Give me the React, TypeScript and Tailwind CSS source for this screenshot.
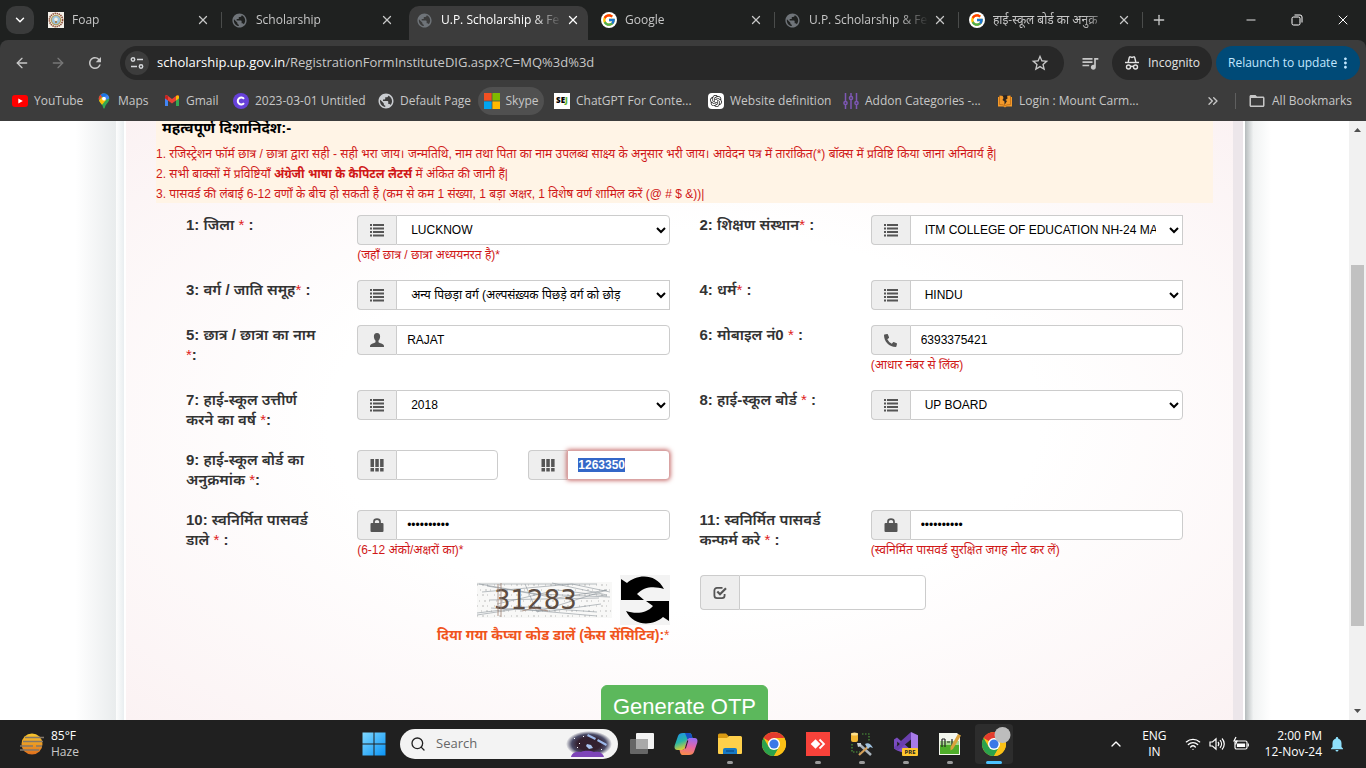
import { useEffect, useRef, type ReactNode } from 'react'
import { ArrowLeft, ArrowRight, ChevronDown, ChevronUp, ChevronsRight, Minus, Plus, Search, X, Wifi } from 'lucide-react'
import { FcGoogle } from 'react-icons/fc'
import { FaPhoneAlt } from 'react-icons/fa'
import { MdPublic, MdQueueMusic, MdStarBorder, MdRefresh, MdMoreVert, MdFolderOpen, MdNotifications } from 'react-icons/md'
import { SiOpenai } from 'react-icons/si'

/* ---------- favicons ---------- */

const Crest = () => (
  <svg viewBox="0 0 16 16" className="size-4">
    <rect width="16" height="16" fill="#f4f1ea" />
    <circle cx="8" cy="8" r="6.6" fill="none" stroke="#8a4a32" strokeWidth="1.6" strokeDasharray="1.4 .7" />
    <circle cx="8" cy="8" r="5.2" fill="#b39a55" />
    <circle cx="8" cy="8" r="4.2" fill="#9cc3dc" />
    <circle cx="8" cy="7.4" r="1.8" fill="#f3efdf" />
    <rect x="7.2" y="9" width="1.6" height="2" fill="#a3703c" />
  </svg>
)

const Globe = () => <MdPublic className="-m-px size-[17px] text-[#6f7479]" />
const LightGlobe = () => <MdPublic className="-m-px size-[18px] text-[#c9ccd0]" />

const Google = () => (
  <span className="flex size-4 items-center justify-center rounded-full bg-white">
    <FcGoogle className="size-3.5" />
  </span>
)

const YouTube = () => (
  <svg viewBox="0 0 16 16" className="size-4">
    <rect y="2" width="16" height="12" rx="3" fill="#f00" />
    <path d="M6.3 5.4v5.2L10.8 8z" fill="#fff" />
  </svg>
)

const Maps = () => (
  <svg viewBox="0 0 16 16" className="size-4">
    <clipPath id="pin">
      <path d="M8 .3a5.3 5.3 0 0 0-5.3 5.4c0 3 2.2 4.3 3.6 6.5C7 13.4 7.2 15.7 8 15.7s1-2.3 1.7-3.5c1.4-2.2 3.6-3.5 3.6-6.5A5.3 5.3 0 0 0 8 .3z" />
    </clipPath>
    <g clipPath="url(#pin)">
      <rect width="16" height="16" fill="#34a853" />
      <path d="M0 0h8L3 8H0z" fill="#ea4335" />
      <path d="M5 0h11L8.500 5.500 4.500 2z" fill="#1a73e8" />
      <path d="M1 10 6 4l4 3-5 6z" fill="#fbbc04" />
      <path d="M16 0v4l-6 3-1-4z" fill="#4285f4" />
    </g>
    <circle cx="8" cy="5.7" r="1.9" fill="#fff" />
  </svg>
)

const Gmail = () => (
  <svg viewBox="0 0 16 16" className="size-4">
    <path d="M1 4v9h3V6.5z" fill="#4285f4" />
    <path d="M15 4v9h-3V6.5z" fill="#34a853" />
    <path d="M1 3.8C1 2.300 2.700 2 3.700 2.800L8 6.100l4.300-3.300C13.300 2 15 2.300 15 3.800v1.400L8 10.500 1 5.200z" fill="#ea4335" />
    <path d="M12 3v4.500l3-2.300V3.800C15 2.300 13.300 2 12 3z" fill="#fbbc04" />
    <path d="M4 3v4.500L1 5.200V3.800C1 2.300 2.700 2 4 3z" fill="#c5221f" />
  </svg>
)

const CBadge = () => (
  <svg viewBox="0 0 16 16" className="size-4">
    <circle cx="8" cy="8" r="8" fill="#6741d9" />
    <path d="M11 10.200A3.500 3.500 0 1 1 11 5.800" fill="none" stroke="#fff" strokeWidth="2" />
  </svg>
)

const Microsoft = () => (
  <svg viewBox="0 0 16 16" className="size-4">
    <path d="M0 0h7.600v7.600H0z" fill="#f25022" />
    <path d="M8.400 0H16v7.600H8.400z" fill="#7fba00" />
    <path d="M0 8.400h7.600V16H0z" fill="#00a4ef" />
    <path d="M8.400 8.400H16V16H8.400z" fill="#ffb900" />
  </svg>
)

const Sej = () => (
  <span className="flex size-4 items-center justify-center bg-white text-[8px] font-black text-black">
    SE<span className="text-[#5cb531]">J</span>
  </span>
)

const OpenAi = () => (
  <span className="flex size-4 items-center justify-center rounded-sm bg-white">
    <SiOpenai className="size-3 text-[#222]" />
  </span>
)

const Sliders = () => (
  <svg viewBox="0 0 16 16" className="size-4" fill="none" stroke="#7e57b5" strokeWidth="1.5">
    <path d="M2.500 0v8M2.500 12v4M8 0v3M8 7v9M13.500 0v8M13.500 12v4" />
    <circle cx="2.5" cy="10" r="1.6" />
    <circle cx="8" cy="5" r="1.6" />
    <circle cx="13.5" cy="10" r="1.6" />
  </svg>
)

const Book = () => (
  <svg viewBox="0 0 16 16" className="size-4">
    <path d="M1 4h1.500V2.500L6 3l2 1.500L10 3l3.500-.5V4H15v9.500H9.500L8 14.500l-1.500-1H1z" fill="#f39a2b" />
    <path d="M2.500 3v8.500l3.500.3 2 1.200 2-1.200 3.500-.3V3" fill="none" stroke="#b8650f" strokeWidth=".7" />
    <path d="M5.500 2.500 10 2l.500 3.500L8.500 7 10 8l-2.500 4V8.500L5.500 7l1-2z" fill="#2d2520" />
  </svg>
)

const Incognito = () => (
  <svg viewBox="0 0 16 16" className="size-4" fill="none" stroke="#e3e3e3" strokeWidth="1.4">
    <path d="M4.200 7 5.300 2.500c.2-.6.6-.8 1.100-.6L8 2.400l1.600-.5c.5-.2.9 0 1.100.6L11.800 7" />
    <path d="M1 7.500h14" />
    <circle cx="4.5" cy="12" r="2" />
    <circle cx="11.5" cy="12" r="2" />
    <path d="M6.500 11.700c1-.6 2-.6 3 0" />
  </svg>
)

const SiteSettings = () => (
  <svg viewBox="0 0 16 16" className="size-4" fill="none" stroke="#d5d7da" strokeWidth="1.5">
    <circle cx="4" cy="4.5" r="1.7" />
    <path d="M8 4.500h6M2 11.500h6" />
    <circle cx="12" cy="11.5" r="1.7" />
  </svg>
)

/* ---------- form glyphs ---------- */

const ListGlyph = () => (
  <svg viewBox="0 0 14 14" className="size-3.5" fill="#555">
    <path d="M0 1h2v2H0zM3 1h11v2H3zM0 4.500h2v2H0zM3 4.500h11v2H3zM0 8h2v2H0zM3 8h11v2H3zM0 11.500h2v2H0zM3 11.500h11v2H3z" />
  </svg>
)

const UserGlyph = () => (
  <svg viewBox="0 0 14 14" className="size-3.5" fill="#555">
    <path d="M7 0C4.800 0 3.800 1.500 3.900 3.700 4 5.500 4.700 6.800 5.500 7.600v1.600C4 10.100 1 10.900.3 12c-.3.500-.3 1.300-.3 2h14c0-.7 0-1.500-.3-2-.7-1.100-3.700-1.900-5.200-2.800V7.600c.8-.8 1.500-2.100 1.600-3.900C10.200 1.500 9.200 0 7 0z" />
  </svg>
)

const PhoneGlyph = () => <FaPhoneAlt className="size-[13px] -scale-x-100 rotate-90 text-[#555]" />

const GridGlyph = () => (
  <svg viewBox="0 0 14 14" className="size-3.5" fill="#555">
    <path d="M.5 1h3.500v8H.5zM5.300 1h3.500v8H5.300zM10.100 1h3.500v8h-3.500zM.5 10h3.500v3.500H.5zM5.300 10h3.500v3.500H5.300zM10.100 10h3.500v3.500h-3.500z" />
  </svg>
)

const LockGlyph = () => (
  <svg viewBox="0 0 14 14" className="size-3.5">
    <path d="M4 6V3.500C4 .2 10 .2 10 3.500V6" fill="none" stroke="#555" strokeWidth="1.7" />
    <rect x=".5" y="5" width="13" height="9" rx="1" fill="#555" />
  </svg>
)

const CheckGlyph = () => (
  <svg viewBox="0 0 14 14" className="size-3.5" fill="none" stroke="#555" strokeWidth="1.8">
    <path d="M9.500 1.800H4A2.600 2.600 0 0 0 1.400 4.400v5.200A2.600 2.600 0 0 0 4 12.200h5a2.600 2.600 0 0 0 2.600-2.600V8" />
    <path d="M4.300 5.500 7 8.200l6-6" strokeWidth="2.2" />
  </svg>
)

/* ---------- browser ---------- */

const tabs = [
  { title: 'Foap', icon: <Crest /> },
  { title: 'Scholarship', icon: <Globe /> },
  { title: 'U.P. Scholarship & Fe', icon: <Globe />, active: true },
  { title: 'Google', icon: <Google /> },
  { title: 'U.P. Scholarship & Fe', icon: <Globe /> },
  { title: 'हाई-स्कूल बोर्ड का अनुक्र', icon: <Google /> },
]

const bookmarks = [
  { title: 'YouTube', icon: <YouTube />, width: 'w-[84px]' },
  { title: 'Maps', icon: <Maps />, width: 'w-[68px]' },
  { title: 'Gmail', icon: <Gmail />, width: 'w-[69px]' },
  { title: '2023-03-01 Untitled', icon: <CBadge />, width: 'w-[145px]' },
  { title: 'Default Page', icon: <LightGlobe />, width: 'w-[100px]' },
  { title: 'Skype', icon: <Microsoft />, width: 'w-[66px] justify-center rounded-full bg-[#505050]' },
  { title: 'ChatGPT For Conte...', icon: <Sej />, width: 'ml-2.5 w-[154px]' },
  { title: 'Website definition', icon: <OpenAi />, width: 'w-[135px]' },
  { title: 'Addon Categories -...', icon: <Sliders />, width: 'w-[154px]' },
  { title: 'Login : Mount Carm...', icon: <Book />, width: '' },
]

function TabStrip() {
  return (
    <div className="flex h-10 shrink-0 items-center bg-[#1f2120] text-[#c7c7c7]">
      <button aria-label="Search tabs" className="ml-1.5 mr-1 flex size-7 shrink-0 items-center justify-center rounded-[10px] bg-[#3a3b3b] text-white">
        <ChevronDown className="size-3.5" strokeWidth={2.5} />
      </button>
      {tabs.map((tab, i) => (
        <div
          key={i}
          className={
            tab.active
              ? 'relative mx-[3px] flex h-[34px] min-w-0 max-w-[179px] flex-1 items-center self-end rounded-t-[10px] bg-[#3c3c3c] pb-1.5 pl-2 pr-2 text-white'
              : 'relative flex h-full min-w-0 max-w-[184px] flex-1 items-center pl-2.5 pr-3'
          }
        >
          <span className="flex w-6 shrink-0">{tab.icon}</span>
          <span className="min-w-0 flex-1 overflow-hidden whitespace-nowrap text-xs [mask-image:linear-gradient(to_right,black_75%,transparent)]">
            {tab.title}
          </span>
          <button aria-label="Close tab" className="ml-1 shrink-0">
            <X className="size-3.5" strokeWidth={2.2} />
          </button>
          {!tab.active && i !== 1 && <span className="absolute right-0 top-3 h-4 w-px bg-[#4a4c4b]" />}
        </div>
      ))}
      <button aria-label="New tab" className="ml-2">
        <Plus className="size-4" />
      </button>
      <div className="ml-auto flex items-center text-white">
        <button aria-label="Minimize" className="flex w-[46px] justify-center"><Minus className="size-3.5" strokeWidth={1.5} /></button>
        <button aria-label="Restore" className="flex w-[46px] justify-center">
          <svg viewBox="0 0 12 12" className="size-3" fill="none" stroke="currentColor">
            <rect x="1" y="3" width="8" height="8" rx="1.5" />
            <path d="M3.500 1h5.500a2 2 0 0 1 2 2v5.500" />
          </svg>
        </button>
        <button aria-label="Close" className="flex w-[46px] justify-center"><X className="size-4" strokeWidth={1.5} /></button>
      </div>
    </div>
  )
}

function Toolbar() {
  return (
    <div className="flex h-[46px] shrink-0 items-center rounded-t-lg bg-[#3c3c3c] pr-1.5 text-[#c7c7c7]">
      <div className="flex w-[120px] shrink-0 items-center gap-5 pl-3.5">
        <button aria-label="Back"><ArrowLeft className="size-4" /></button>
        <button aria-label="Forward" className="text-[#777]"><ArrowRight className="size-4" /></button>
        <button aria-label="Reload"><MdRefresh className="size-[18px]" /></button>
      </div>
      <div className="flex h-[34px] min-w-0 flex-1 items-center rounded-full bg-[#282828] pl-[5px] pr-3.5">
        <span className="flex size-6 shrink-0 items-center justify-center rounded-full bg-[#3c3c3c]"><SiteSettings /></span>
        <span className="ml-2 flex-1 truncate text-[13px]">
          <span className="text-white">scholarship.up.gov.in</span>/RegistrationFormInstituteDIG.aspx?C=MQ%3d%3d
        </span>
        <button aria-label="Bookmark this tab"><MdStarBorder className="size-5" /></button>
      </div>
      <button aria-label="Media" className="flex w-12 shrink-0 items-center justify-center pl-1"><MdQueueMusic className="size-5" /></button>
      <span className="mr-1 flex h-[34px] w-[100px] shrink-0 items-center justify-center gap-2 rounded-full bg-[#282828] text-xs text-[#e3e3e3]">
        <Incognito /> Incognito
      </span>
      <button className="flex h-[34px] w-36 shrink-0 items-center justify-between whitespace-nowrap rounded-full bg-[#004a77] pl-3 pr-1.5 text-xs text-[#c2e7ff]">
        Relaunch to update <MdMoreVert className="size-5" />
      </button>
    </div>
  )
}

function Bookmarks() {
  return (
    <div className="flex h-[35px] shrink-0 items-center bg-[#3c3c3c] pb-1.5 pr-3.5 text-xs text-[#c7c7c7]">
      <nav className="flex min-w-0 flex-1 items-center overflow-hidden pl-3">
        {bookmarks.map((b) => (
          <a key={b.title} href="#" className={`flex h-7 shrink-0 items-center gap-1.5 whitespace-nowrap ${b.width}`}>
            <span className="flex w-4 shrink-0">{b.icon}</span>
            {b.title}
          </a>
        ))}
      </nav>
      <button aria-label="More bookmarks"><ChevronsRight className="size-4" /></button>
      <span className="ml-3.5 mr-3 h-4 w-px bg-[#5f5f5f]" />
      <a href="#" className="flex items-center gap-1.5 whitespace-nowrap">
        <MdFolderOpen className="size-[18px]" />
        All Bookmarks
      </a>
    </div>
  )
}

/* ---------- form ---------- */

const Star = () => <span className="font-normal text-[#e02020]">*</span>

const control = 'h-[30px] w-full min-w-0 border border-[#ccc] bg-white px-2.5 text-xs text-black'

function Addon({ children }: { children: ReactNode }) {
  return (
    <span className="flex w-[39px] shrink-0 items-center justify-center rounded-l border border-r-0 border-[#ccc] bg-[#eee]">
      {children}
    </span>
  )
}

function Label({ id, children }: { id: string; children: ReactNode }) {
  return (
    <label htmlFor={id} className="col-span-2 mb-[5px] block px-[15px] text-[15px] font-semibold leading-5 text-[#333]">
      {children}
    </label>
  )
}

function Field({ icon, help, children }: { icon: ReactNode; help?: string; children: ReactNode }) {
  return (
    <div className="col-span-4 px-[15px]">
      <div className="flex">
        <Addon>{icon}</Addon>
        {children}
      </div>
      {help && <p className="h-5 whitespace-nowrap text-xs leading-5 text-[#d01818]">{help}</p>}
    </div>
  )
}

function SelectBox({ id, value, rounded = true }: { id: string; value: string; rounded?: boolean }) {
  return (
    <select id={id} className={`${control} ${rounded ? 'rounded-r' : ''}`}>
      <option>{value}</option>
    </select>
  )
}

function Row({ children }: { children: ReactNode }) {
  return <div className="mb-[15px] grid grid-cols-12 items-start">{children}</div>
}

function Captcha() {
  return (
    <svg viewBox="0 0 135 36" className="h-9 w-[135px]" role="img" aria-label="Captcha">
      <rect width="135" height="36" fill="#f8f8f7" />
      <g stroke="#cfcfcf" strokeWidth="1.500" strokeDasharray="1 4 2 3 1 6">
        <path d="M0 3h135M3 8h132M0 13h135M2 19h133M0 24h135M4 29h131M0 34h135" />
      </g>
      <g stroke="#8b939a" strokeWidth=".6" fill="none">
        <path d="M2 2 60 12 133 15M0 31 50 25 120 30M5 10l90-8 38 8M20 22l60-14 50 6M10 4l70 12 50-8M14 26l60 3 50-7M0 33l40-6 80 7M60 30 130 8M12 18l110-2M48 2l12 28M75 1l55 12M0 2h120" />
      </g>
      <text x="17" y="27" fontSize="26" fill="#5d4d42" className="[font-family:'DejaVu_Sans',sans-serif]">31283</text>
      <path d="M24 1v34M21 2v32M45 29l12-3 14 3" stroke="#a08272" strokeWidth=".8" fill="none" />
    </svg>
  )
}

function RefreshArrows() {
  return (
    <svg viewBox="0 0 50 50" className="size-[50px]">
      <rect width="50" height="50" fill="#f3f3f3" />
      <path d="M1 4 7 8C17-1 36-2 44 14 35 11 24 11 17 19l7 6H1z" />
      <path d="M49 46 43 42C33 51 14 52 6 36 15 39 26 39 33 31l-7-5h23z" />
    </svg>
  )
}

function RegistrationForm() {
  const roll = useRef<HTMLInputElement>(null)

  useEffect(() => {
    roll.current?.focus({ preventScroll: true })
    roll.current?.select()
  }, [])

  return (
    <form className="px-[15px] pt-3" onSubmit={(e) => e.preventDefault()}>
      <Row>
        <Label id="district">1: जिला <Star /> :</Label>
        <Field icon={<ListGlyph />} help="(जहाँ छात्र / छात्रा अध्ययनरत है)*">
          <SelectBox id="district" value="LUCKNOW" />
        </Field>
        <Label id="institute">2: शिक्षण संस्थान<Star /> :</Label>
        <Field icon={<ListGlyph />}>
          <SelectBox id="institute" value="ITM COLLEGE OF EDUCATION NH-24 MALL ROAD" rounded={false} />
        </Field>
      </Row>
      <Row>
        <Label id="category">3: वर्ग / जाति समूह<Star /> :</Label>
        <Field icon={<ListGlyph />}>
          <SelectBox id="category" value="अन्य पिछड़ा वर्ग (अल्पसंख़्यक पिछड़े वर्ग को छोड़" rounded={false} />
        </Field>
        <Label id="religion">4: धर्म<Star /> :</Label>
        <Field icon={<ListGlyph />}>
          <SelectBox id="religion" value="HINDU" rounded={false} />
        </Field>
      </Row>
      <Row>
        <Label id="student">5: छात्र / छात्रा का नाम <Star />:</Label>
        <Field icon={<UserGlyph />}>
          <input id="student" type="text" defaultValue="RAJAT" className={`${control} rounded-r`} />
        </Field>
        <Label id="mobile">6: मोबाइल नं0 <Star /> :</Label>
        <Field icon={<PhoneGlyph />} help="(आधार नंबर से लिंक)">
          <input id="mobile" type="tel" defaultValue="6393375421" className={`${control} rounded-r`} />
        </Field>
      </Row>
      <Row>
        <Label id="year">7: हाई-स्कूल उत्तीर्ण करने का वर्ष <Star />:</Label>
        <Field icon={<ListGlyph />}>
          <SelectBox id="year" value="2018" />
        </Field>
        <Label id="board">8: हाई-स्कूल बोर्ड <Star /> :</Label>
        <Field icon={<ListGlyph />}>
          <SelectBox id="board" value="UP BOARD" />
        </Field>
      </Row>
      <Row>
        <Label id="roll">9: हाई-स्कूल बोर्ड का अनुक्रमांक <Star />:</Label>
        <div className="col-span-2 flex px-[15px]">
          <Addon><GridGlyph /></Addon>
          <input type="text" aria-label="Roll code" className={`${control} rounded-r`} />
        </div>
        <div className="col-span-2 flex px-[15px]">
          <Addon><GridGlyph /></Addon>
          <input
            id="roll"
            ref={roll}
            type="text"
            defaultValue="1263350"
            className="h-[30px] w-full min-w-0 rounded-r border border-[#d9a3a3] bg-white px-2.5 text-xs font-bold text-black shadow-[0_0_5px_#b94a48] outline-none selection:bg-[#3367c8] selection:text-white"
          />
        </div>
      </Row>
      <Row>
        <Label id="password">10: स्वनिर्मित पासवर्ड डाले <Star /> :</Label>
        <Field icon={<LockGlyph />} help="(6-12 अंको/अक्षरों का)*">
          <input id="password" type="password" defaultValue="Rajat@1234" className={`${control} rounded-r`} />
        </Field>
        <Label id="confirm">11: स्वनिर्मित पासवर्ड कन्फर्म करे <Star /> :</Label>
        <Field icon={<LockGlyph />} help="(स्वनिर्मित पासवर्ड सुरक्षित जगह नोट कर लें)">
          <input id="confirm" type="password" defaultValue="Rajat@1234" className={`${control} rounded-r`} />
        </Field>
      </Row>
      <div className="grid grid-cols-12 items-start">
        <div className="col-span-6 flex flex-col items-end px-[15px]">
          <div className="flex items-center gap-2">
            <Captcha />
            <button type="button" aria-label="New captcha"><RefreshArrows /></button>
          </div>
          <label htmlFor="captcha" className="text-sm font-bold leading-5 text-[#f0541c]">
            दिया गया कैप्चा कोड डालें (केस सेंसिटिव):<span className="font-normal">*</span>
          </label>
        </div>
        <div className="col-span-3 flex h-[35px] px-[15px]">
          <Addon><CheckGlyph /></Addon>
          <input id="captcha" type="text" className="w-full min-w-0 rounded-r border border-[#ccc] bg-white px-2.5 text-xs text-black" />
        </div>
      </div>
      <div className="mt-10 flex justify-center">
        <button className="rounded-md border border-[#5cb85c] bg-[#5cb85c] px-[11px] py-1.5 text-[22px] leading-[30px] text-white">
          Generate OTP
        </button>
      </div>
    </form>
  )
}

function ScrollBar() {
  return (
    <div className="flex w-[17px] shrink-0 flex-col items-center bg-[#f1f1f1]">
      <svg viewBox="0 0 17 17" className="size-[17px] shrink-0" fill="#505050"><path d="M5 11l3.500-4L12 11z" /></svg>
      <div className="grow-[127]" />
      <div className="w-[13px] grow-[361] bg-[#c1c1c1]" />
      <div className="grow-[77]" />
      <svg viewBox="0 0 17 17" className="size-[17px] shrink-0" fill="#505050"><path d="M5 6l3.500 4L12 6z" /></svg>
    </div>
  )
}

function Page() {
  return (
    <div className="flex min-h-0 flex-1 overflow-hidden bg-white [font-family:'Liberation_Sans','Noto_Sans_Devanagari','Noto_Sans',sans-serif]">
      <div className="w-[116px] shrink-0 bg-linear-to-r from-white from-65% to-[#e9eced]" />
      <div className="w-2 shrink-0 bg-linear-to-r from-[#fdfdfd] to-[#e9eef0]" />
      <main className="min-w-0 flex-1 border-x-2 border-white bg-[radial-gradient(ellipse_at_center,#ffffff_45%,#fbf2f3_100%)]">
        <div className="flex">
          <div className="min-w-0 flex-1 pl-[30px] pr-5">
            <section className="flow-root h-[82px] bg-[#fff4e6]">
              <h2 className="-mt-1 pl-1.5 pt-px text-[15px] font-bold leading-5 text-black">महत्वपूर्ण दिशानिर्देश:-</h2>
              <ol className="whitespace-nowrap pt-1.5 text-xs leading-5 text-[#d01818]">
                <li>1. रजिस्ट्रेशन फॉर्म छात्र / छात्रा द्वारा सही - सही भरा जाय। जन्मतिथि, नाम तथा पिता का नाम उपलब्ध साक्ष्य के अनुसार भरी जाय। आवेदन पत्र में तारांकित(*) बॉक्स में प्रविष्टि किया जाना अनिवार्य है|</li>
                <li>2. सभी बाक्सों में प्रविष्टियाँ <b>अंग्रेजी भाषा के कैपिटल लैटर्स</b> में अंकित की जानी हैं|</li>
                <li>3. पासवर्ड की लंबाई 6-12 वर्णों के बीच हो सकती है (कम से कम 1 संख्या, 1 बड़ा अक्षर, 1 विशेष वर्ण शामिल करें (@ # $ &amp;))|</li>
              </ol>
            </section>
            <RegistrationForm />
          </div>
          <div className="w-2.5 shrink-0 self-stretch bg-[#ece6ea]" />
        </div>
      </main>
      <div className="w-[104px] shrink-0 bg-linear-to-r from-[#b5bbbc] via-[#f1f3f3] via-8% to-white to-25%" />
      <ScrollBar />
    </div>
  )
}

/* ---------- taskbar ---------- */

const Chrome = ({ badge = false }: { badge?: boolean }) => (
  <svg viewBox="0 0 24 24" className="size-6 overflow-visible">
    <circle cx="12" cy="12" r="12" fill="#fbc116" />
    <path d="M12 12 1.600 6A12 12 0 0 1 22.400 6H12z" fill="#e33b2e" />
    <path d="M12 12H12L17.200 15 12 24A12 12 0 0 1 1.600 6l5.200 9z" fill="#2ba24c" />
    <path d="M22.400 6A12 12 0 0 1 12 24l5.200-9L17.200 9 12 6z" fill="#fbc116" />
    <circle cx="12" cy="12" r="6" fill="#fff" />
    <circle cx="12" cy="12" r="4.6" fill="#3b78e7" />
    {badge && <circle cx="20.5" cy="3" r="8" fill="#bdbdbd" />}
  </svg>
)

const TaskView = () => (
  <svg viewBox="0 0 24 24" className="size-6">
    <rect x="6" y="1" width="18" height="16" rx="1" fill="#f2f2f2" />
    <rect y="7" width="18" height="15" rx="1" fill="#666" />
    <path d="M6 7h12v10H6z" fill="#a9a9a9" />
  </svg>
)

const Copilot = () => (
  <svg viewBox="0 0 24 24" className="size-6">
    <defs>
      <linearGradient id="cpa" x2=".4" y2="1"><stop stopColor="#1d8ff2" /><stop offset=".55" stopColor="#27b5a5" /><stop offset="1" stopColor="#e4cf2e" /></linearGradient>
      <linearGradient id="cpb" x1=".6" x2=".4" y2="1"><stop stopColor="#9b6cf0" /><stop offset=".5" stopColor="#e566a6" /><stop offset="1" stopColor="#f98b4a" /></linearGradient>
    </defs>
    <path d="M9 1h6c1.500 0 2.300.8 2.800 2.300L18.500 6h-2.700c-1.300 0-2 .7-2.500 2.200l-2.200 7.600C10.600 17.400 9.600 18 8 18H3.500C1 18 0 16 .7 13.500L4 4c.7-2 2.300-3 5-3z" fill="url(#cpa)" />
    <path d="M15 23H9c-1.500 0-2.300-.8-2.800-2.300L5.500 18h2.700c1.300 0 2-.7 2.500-2.200l2.200-7.600c.5-1.600 1.500-2.200 3.100-2.200h4.500C23 6 24 8 23.300 10.500L20 20c-.7 2-2.300 3-5 3z" fill="url(#cpb)" />
    <path d="M11 1h4c1.500 0 2.300.8 2.800 2.300L18.500 6h-2.700c-1 0-1.800.5-2.300 1.600z" fill="#1750c4" />
    <path d="M11.100 15.800 13.300 8.200l1 .5-2.600 8.300z" fill="#202020" />
  </svg>
)

const Explorer = () => (
  <svg viewBox="0 0 24 24" className="size-6">
    <path d="M0 3a1.500 1.500 0 0 1 1.500-1.500H8L10.500 4v4H0z" fill="#d99a12" />
    <path d="M0 6h9l2-2h11.500A1.500 1.500 0 0 1 24 5.500V21a1 1 0 0 1-1 1H1a1 1 0 0 1-1-1z" fill="#ffd04b" />
    <path d="M5 22v-4a2 2 0 0 1 2-2h10a2 2 0 0 1 2 2v4z" fill="#1779c4" />
    <path d="M8 19h8" stroke="#0c5291" strokeWidth="1.5" />
  </svg>
)

const AnyDesk = () => (
  <svg viewBox="0 0 24 24" className="size-6">
    <rect width="24" height="24" fill="#f8423a" />
    <path d="M9.500 7.200 14.300 12l-4.800 4.800L4.700 12z" fill="#fff" />
    <path d="M13.500 7.500 18 12l-4.500 4.500" fill="none" stroke="#fff" strokeWidth="1.8" />
  </svg>
)

const SqlTools = () => (
  <svg viewBox="0 0 24 24" className="size-6">
    <path d="M12 2h7v8M2 12v8h8" fill="none" stroke="#4f9c3c" strokeWidth="1.2" strokeDasharray="1.5 1.5" />
    <rect x="1" y="1" width="7" height="9" rx="2" fill="#f2b632" />
    <ellipse cx="4.5" cy="2" rx="3.5" ry="1.5" fill="#ffe08a" />
    <path d="M9 12 21 23" stroke="#aab4bd" strokeWidth="2.5" />
    <path d="M20 13 9 23" stroke="#d3a05a" strokeWidth="2.2" />
    <path d="M15 12c3-2 6 0 8 4l-3-1-2 2z" fill="#9fc2e0" />
    <path d="M7 11h4v3L8 15z" fill="#c7cfd6" />
  </svg>
)

const VisualStudio = () => (
  <svg viewBox="0 0 24 24" className="size-6">
    <path d="M0 7.500 3 5.500 17 18v5.500L3 18.500l-3-2z" fill="#7a4cc0" />
    <path d="M17 0v7.500L4 18.300 0 16.500v-1.200z" fill="#6a3fae" />
    <path d="M3.200 9.500v5l2.600-2.500z" fill="#202020" />
    <path d="M17 0 24 3.300v17L17 24z" fill="#a77be8" />
    <rect x="8" y="16" width="16" height="8" rx="1" fill="#ffc62e" />
    <text x="16" y="22.3" fontSize="6" fontWeight="bold" textAnchor="middle" fill="#222">PRE</text>
  </svg>
)

const NotepadGreen = () => (
  <svg viewBox="0 0 24 24" className="size-6">
    <path d="M1 1h18l3 3v19H1z" fill="#f4f7ee" />
    <path d="M2 13h19v9H2z" fill="#4fae2a" />
    <path d="M2 9h19v4H2z" fill="#a8d98f" />
    <path d="M4 7v8M7 7v8M4 7h3M9 10h3M14 7v8" stroke="#222" strokeWidth="1.2" />
    <path d="m20 2 3 1.500L15 17l-2.500 1.500V15z" fill="#dba33c" />
  </svg>
)

const apps: { name: string; icon: ReactNode; mark?: 'open' | 'active' }[] = [
  { name: 'Task view', icon: <TaskView /> },
  { name: 'Copilot', icon: <Copilot /> },
  { name: 'File Explorer', icon: <Explorer />, mark: 'open' },
  { name: 'Google Chrome', icon: <Chrome /> },
  { name: 'AnyDesk', icon: <AnyDesk />, mark: 'open' },
  { name: 'SQL Server', icon: <SqlTools />, mark: 'open' },
  { name: 'Visual Studio', icon: <VisualStudio />, mark: 'open' },
  { name: 'Report Viewer', icon: <NotepadGreen />, mark: 'open' },
  { name: 'Google Chrome Incognito', icon: <Chrome badge />, mark: 'active' },
]

function SearchArt() {
  return (
    <svg viewBox="0 0 46 26" className="h-[26px] w-[46px]">
      <defs>
        <radialGradient id="sky"><stop offset=".5" stopColor="#33202f" /><stop offset=".75" stopColor="#4a4a66" /><stop offset="1" stopColor="#f3f3f3" /></radialGradient>
      </defs>
      <ellipse cx="23" cy="13" rx="23" ry="13" fill="url(#sky)" />
      <path d="M5 26c1-5 6-6 10-5 5-2 10-1 13 0 5-1 9 1 10 5z" fill="#7d45b8" />
      <path d="m22 3 8 4-1 2-8-4zM32 8l9 5-1 2-9-5z" fill="#9db9ea" />
      <path d="m21 13 4 1 2 3-4 1-3-3z" fill="#a9c3f0" />
      <path d="M8 7h1v1H8zM13 12h1v1h-1zM17 5h1v1h-1zM35 18h1v1h-1zM11 16h1v1h-1z" fill="#fff" />
    </svg>
  )
}

function Taskbar() {
  return (
    <footer className="flex h-12 shrink-0 items-center bg-[#202020] text-xs text-white">
      <div className="flex flex-1 items-center gap-[7px] pl-5">
        <svg viewBox="0 0 24 22" className="h-[22px] w-6">
          <defs><linearGradient id="sun" x2="0" y2="1"><stop stopColor="#f7c52b" /><stop offset="1" stopColor="#e0701d" /></linearGradient></defs>
          <circle cx="12" cy="11" r="10.5" fill="url(#sun)" />
          <path d="M5 4.500h19M3 8.500h20M0 13h13M16 13h6M0 17h19" stroke="#84776a" strokeWidth="1.6" />
        </svg>
        <div className="leading-4">
          <div>85°F</div>
          <div className="text-[#c9c9c9]">Haze</div>
        </div>
      </div>
      <div className="flex items-center pl-3">
        <button aria-label="Start">
          <svg viewBox="0 0 24 24" className="size-6">
            <defs><linearGradient id="win" x2="1" y2="1"><stop stopColor="#7fd8ff" /><stop offset="1" stopColor="#0a93f5" /></linearGradient></defs>
            <path d="M.5.500h11v11H.5zM12.500.5h11v11h-11zM.5 12.500h11v11H.5zM12.500 12.500h11v11h-11z" fill="url(#win)" />
          </svg>
        </button>
        <div className="ml-3.5 mr-0.5 flex h-[30px] w-[218px] items-center rounded-full bg-[#f3f3f3] pl-2.5 pr-1.5">
          <Search className="size-4 text-[#222]" />
          <input type="text" aria-label="Search" placeholder="Search" className="ml-2.5 min-w-0 flex-1 bg-transparent text-[13px] placeholder:text-[#666]" />
          <SearchArt />
        </div>
        {apps.map((app) => (
          <button
            key={app.name}
            aria-label={app.name}
            className={
              app.mark === 'active'
                ? 'relative mx-[3px] flex h-10 w-[38px] items-center justify-center rounded bg-[#2d2d2d]'
                : 'relative flex h-10 w-11 items-center justify-center'
            }
          >
            {app.icon}
            {app.mark === 'open' && <span className="absolute bottom-0 h-[3px] w-1.5 rounded-full bg-[#9a9a9a]" />}
            {app.mark === 'active' && <span className="absolute bottom-0 h-[3px] w-4 rounded-full bg-[#4cc2ff]" />}
          </button>
        ))}
      </div>
      <div className="flex flex-1 items-center justify-end pr-5 leading-4">
        <ChevronUp className="size-4" />
        <div className="ml-[18px] mr-[18px] text-center">
          <div>ENG</div>
          <div>IN</div>
        </div>
        <div className="flex items-center gap-2">
          <Wifi className="size-4" />
          <svg viewBox="0 0 16 16" className="size-4" fill="none" stroke="#fff" strokeWidth="1.2">
            <path d="M1 6h2.500L7 2.800v10.400L3.500 10H1zM9 6c1 1.200 1 2.800 0 4M11 4.200c2 2.200 2 5.400 0 7.600M13 2.500c3 3.200 3 7.800 0 11" />
          </svg>
          <svg viewBox="0 0 16 16" className="size-4" fill="none" stroke="#fff" strokeWidth="1.2">
            <rect x="2" y="5" width="12" height="8" rx="1.5" />
            <path d="M4.500 8h7v2.500h-7z" fill="#fff" />
            <path d="M15.300 7.500v3M3 1 1 5h3L2.500 8.500" />
          </svg>
        </div>
        <div className="ml-4 text-right">
          <div>2:00 PM</div>
          <div>12-Nov-24</div>
        </div>
        <MdNotifications className="ml-1.5 size-[18px] text-[#8fe0fb]" />
      </div>
    </footer>
  )
}

export default function App() {
  return (
    <div className="flex h-screen flex-col overflow-hidden bg-[#1f2120] [font-family:'Open_Sans','Noto_Sans','Noto_Sans_Devanagari',sans-serif]">
      <TabStrip />
      <Toolbar />
      <Bookmarks />
      <Page />
      <Taskbar />
    </div>
  )
}
